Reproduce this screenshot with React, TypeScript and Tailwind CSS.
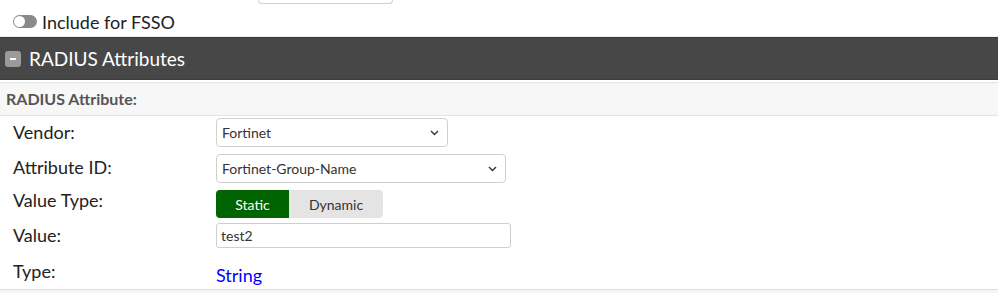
import React from "react";

const Chevron = () => (
  <svg width="9" height="6" viewBox="0 0 9 6" className="shrink-0">
    <path d="M1 1 L4.5 4.5 L8 1" fill="none" stroke="#333" strokeWidth="1.4" />
  </svg>
);

export default function App() {
  const font = { fontFamily: "Lato, 'Open Sans', sans-serif" };
  return (
    <div className="w-[998px] h-[293px] overflow-hidden bg-white text-[#222]" style={font}>
      {/* remnant of input above */}
      <div className="ml-[258px] w-[135px] h-[4px] border border-t-0 border-[#cfcfcf] rounded-b-[4px]" />
      {/* toggle row */}
      <div className="h-[32px] flex items-start pl-[13px] pt-[8px] gap-[5px]">
        <div className="mt-[3px] w-[24px] h-[13px] rounded-full bg-[#8a8a8a] flex items-center pl-[1px]">
          <div className="w-[11px] h-[11px] rounded-full bg-white" />
        </div>
        <span className="text-[18px] leading-[20px] text-[#222]">Include for FSSO</span>
      </div>
      <div className="h-[1px] bg-[#efefef]" />
      {/* dark header */}
      <div className="h-[43px] bg-[#474747] border-t border-b border-[#3c3c3c] flex items-center pl-[5px] gap-[8px]">
        <div className="w-[16px] h-[16px] rounded-[3px] bg-[#9a9a9a] flex items-center justify-center">
          <div className="w-[6px] h-[2px] bg-white" />
        </div>
        <span className="text-[19px] text-white leading-none">RADIUS Attributes</span>
      </div>
      <div className="h-[2px] bg-white" />
      {/* sub header */}
      <div className="h-[34px] bg-[#f7f7f7] border-t border-b border-[#e4e4e4] flex items-center pl-[6px]">
        <span className="text-[16px] font-bold text-[#555]">RADIUS Attribute:</span>
      </div>
      {/* body */}
      <div className="h-[174px] border-b border-[#dddddd] pt-[2px]">
        {/* Vendor */}
        <div className="flex items-start h-[36px]">
          <div className="w-[216px] pl-[13px] pt-[2px] text-[18px] leading-[24px]">Vendor:</div>
          <div className="w-[232px] h-[29px] border border-[#cfcfcf] rounded-[4px] flex items-center justify-between pl-[5px] pr-[8px] text-[14px] text-[#333]">
            <span>Fortinet</span>
            <Chevron />
          </div>
        </div>
        {/* Attribute ID */}
        <div className="flex items-start h-[36px]">
          <div className="w-[216px] pl-[13px] pt-[1px] text-[18px] leading-[24px]">Attribute ID:</div>
          <div className="w-[290px] h-[29px] border border-[#cfcfcf] rounded-[4px] flex items-center justify-between pl-[5px] pr-[8px] text-[14px] text-[#333]">
            <span>Fortinet-Group-Name</span>
            <Chevron />
          </div>
        </div>
        {/* Value Type */}
        <div className="flex items-start h-[33px]">
          <div className="w-[216px] pl-[13px] text-[18px] leading-[20px]">Value Type:</div>
          <div className="flex h-[28px] rounded-[4px] overflow-hidden text-[14px]">
            <div className="w-[73px] bg-[#006400] text-white flex items-center justify-center">Static</div>
            <div className="w-[94px] bg-[#e4e4e4] text-[#333] flex items-center justify-center">Dynamic</div>
          </div>
        </div>
        {/* Value */}
        <div className="flex items-start h-[36px]">
          <div className="w-[216px] pl-[13px] text-[18px] leading-[24px]">Value:</div>
          <div className="w-[295px] h-[25px] border border-[#cfcfcf] rounded-[3px] flex items-center pl-[4px] text-[14px] text-[#333]">
            test2
          </div>
        </div>
        {/* Type */}
        <div className="flex items-start">
          <div className="w-[216px] pl-[13px] text-[18px] leading-[24px]">Type:</div>
          <div className="text-[18px] leading-[24px] text-[#0000ff] pt-[4px]">String</div>
        </div>
      </div>
      <div className="h-[3px] bg-[#f5f5f5]" />
    </div>
  );
}
